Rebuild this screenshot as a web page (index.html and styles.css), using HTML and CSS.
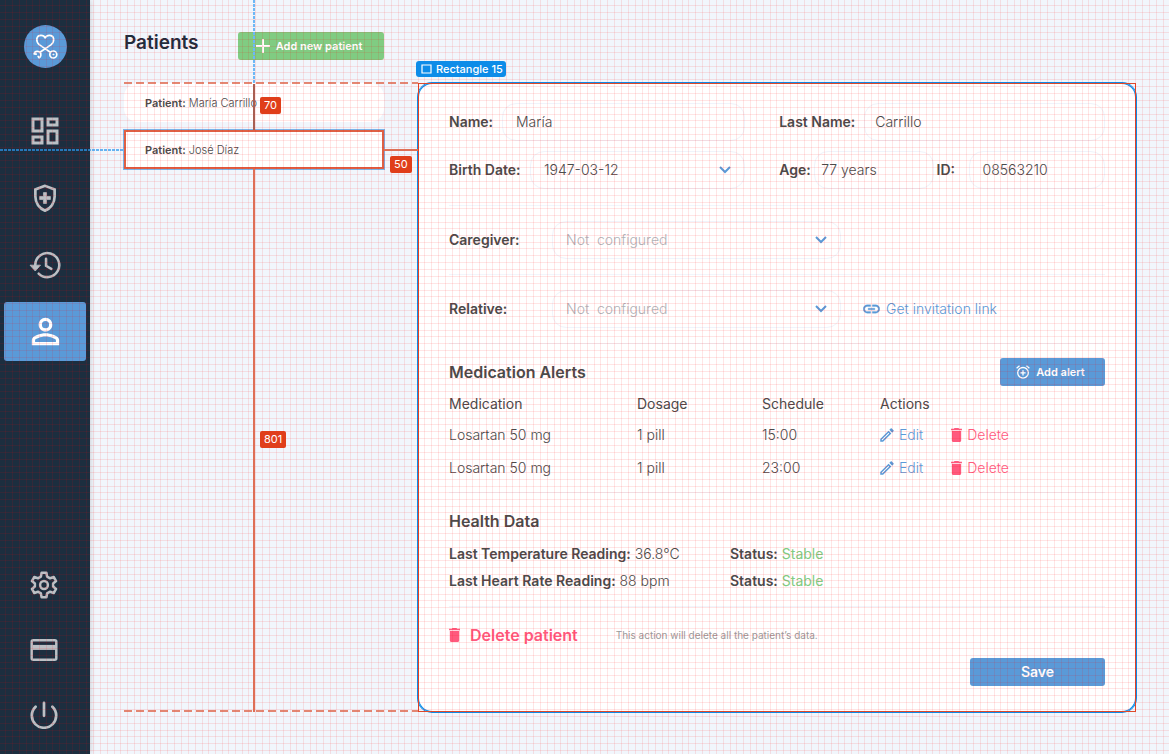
FILE: index.html
```html
<!DOCTYPE html>
<html lang="en">
<head>
<meta charset="utf-8">
<meta name="viewport" content="width=device-width, initial-scale=1">
<title>Patients</title>
<link rel="stylesheet" href="styles.css">
</head>
<body>
<svg class="symbols" aria-hidden="true">
  <symbol id="chevron" viewBox="0 0 12 8"><path d="M1 1l5 5 5-5" fill="none" stroke="currentColor" stroke-width="2"/></symbol>
  <symbol id="pencil" viewBox="0 0 24 24"><path fill="currentColor" d="M14.06 9.02l.92.92L5.92 19H5v-.92l9.06-9.06M17.66 3c-.25 0-.51.1-.7.29l-1.83 1.83 3.75 3.75 1.83-1.83c.39-.39.39-1.02 0-1.41l-2.34-2.34c-.2-.2-.45-.29-.71-.29zm-3.6 3.19L3 17.25V21h3.75L17.81 9.94l-3.75-3.75z"/></symbol>
  <symbol id="trash" viewBox="5 3 14 18"><path fill="currentColor" d="M6 19c0 1.100.9 2 2 2h8c1.100 0 2-.9 2-2V7H6v12zM19 4h-3.500l-1-1h-5l-1 1H5v2h14V4z"/></symbol>
</svg>
<div class="app">
  <nav class="sidebar" aria-label="Main">
    <div class="sidebar-group">
      <a class="logo" href="#" aria-label="Home">
        <svg width="43" height="43" viewBox="0 0 43 43" fill="none" stroke="#fff" stroke-width="1.700" stroke-linecap="round" stroke-linejoin="round">
          <path d="M26.300 27.300L21 23.600L15.200 19.600C11.500 16.300 12 10.400 17 10.300C19 10.300 20.600 11.400 21.200 12.800C21.800 11.400 23.400 10.300 25.400 10.300C30.300 10.400 31 16.300 27.200 19.600L16 27.300"/>
          <circle cx="29.300" cy="29.500" r="3.500"/><circle cx="29.300" cy="29.500" r=".6" fill="#fff" stroke-width=".6"/>
          <path d="M10.200 28.800c.4-1.700 2-2.700 3.600-2.400 1.900.3 3.300 1.900 3 3.900-.1 1-.8 1.900-1.700 2.500M10.200 28.800l2 .4M15.100 32.800l-.9-1.300"/>
        </svg>
      </a>
      <a class="nav-item" href="#" aria-label="Dashboard"><svg width="36" height="36" viewBox="0 0 24 24" fill="currentColor"><path d="M19 5v2h-4V5h4M9 5v6H5V5h4m10 8v6h-4v-6h4M9 17v2H5v-2h4M21 3h-8v6h8V3zM11 3H3v10h8V3zm10 8h-8v10h8V11zm-10 4H3v6h8v-6z"/></svg></a>
      <a class="nav-item" href="#" aria-label="Health"><svg width="34" height="34" viewBox="0 0 24 24"><path d="M12 3.400L5.200 6V11c0 4.500 2.800 8.500 6.800 9.900 4-1.400 6.800-5.400 6.800-9.900V6z" fill="none" stroke="currentColor" stroke-width="1.900"/><path d="M10.900 8.200h2.200v2.700h2.700v2.200h-2.700v2.700h-2.200v-2.700H8.200v-2.200h2.700z" fill="currentColor" stroke="currentColor" stroke-width=".5"/></svg></a>
      <a class="nav-item" href="#" aria-label="History"><svg width="36" height="36" viewBox="0 0 24 24"><path d="M5.500 12a8 8 0 1 1 2.300 5.700M12.700 7.800v4.700l3.500 2.100" fill="none" stroke="currentColor" stroke-width="1.700" stroke-linecap="round"/><path d="M2 12.100h7L5.500 16z" fill="currentColor" stroke="currentColor" stroke-width=".5" stroke-linejoin="round"/></svg></a>
      <a class="nav-item active" href="#" aria-label="Patients" aria-current="page"><svg width="41" height="41" viewBox="0 0 24 24" fill="currentColor"><path d="M12 5.900a2.100 2.100 0 1 1 0 4.200 2.100 2.100 0 0 1 0-4.200m0 9c2.970 0 6.100 1.460 6.100 2.100v1.100H5.900V17c0-.64 3.130-2.100 6.100-2.100M12 4C9.790 4 8 5.790 8 8s1.790 4 4 4 4-1.790 4-4-1.790-4-4-4zm0 9c-2.670 0-8 1.340-8 4v3h16v-3c0-2.660-5.330-4-8-4z"/></svg></a>
    </div>
    <div class="sidebar-group">
      <a class="nav-item" href="#" aria-label="Settings"><svg width="28" height="28" viewBox="0 0 28 28" fill="none" stroke="currentColor" stroke-width="2.500" stroke-linejoin="round"><path d="M11.600 1.800h4.800l.7 3.800 3 1.700 3.600-1.300 2.400 4.100-3 2.400v3l3 2.400-2.400 4.100-3.600-1.300-3 1.700-.7 3.800h-4.800l-.7-3.800-3-1.700-3.600 1.300-2.400-4.100 3-2.400v-3l-3-2.400L4.300 6l3.600 1.300 3-1.700z"/><circle cx="14" cy="14" r="3.900"/></svg></a>
      <a class="nav-item" href="#" aria-label="Billing"><svg width="28" height="24" viewBox="0 0 28 24" fill="none" stroke="currentColor" stroke-width="2.500"><rect x="1.700" y="2.200" width="24.600" height="19.600" rx="1.500"/><path d="M1.600 9.400h24.800" stroke-width="5"/></svg></a>
      <a class="nav-item" href="#" aria-label="Log out"><svg width="28" height="28" viewBox="0 0 28 28" fill="none" stroke="currentColor" stroke-width="2.700" stroke-linecap="round"><path d="M14 1.800v13M5.600 5.700a12.200 12.200 0 1 0 16.800 0"/></svg></a>
    </div>
  </nav>

  <main class="workspace">
    <section class="patients">
      <header class="patients-head">
        <h1>Patients</h1>
        <button class="btn btn-add" type="button"><svg width="14" height="14" viewBox="0 0 14 14"><path d="M7 0v14M0 7h14" stroke="#fff" stroke-width="2"/></svg>Add new patient</button>
      </header>
      <ul class="patient-list">
        <li class="patient"><span><b>Patient:</b> María Carrillo</span></li>
        <li class="patient selected"><span><b>Patient:</b> José Díaz</span></li>
      </ul>
      <div class="guide guide-v"></div>
      <div class="guide guide-h"></div>
      <div class="dash dash-top"></div>
      <div class="dash dash-bottom"></div>
      <div class="measure measure-top"></div>
      <div class="measure measure-bottom"></div>
      <div class="measure-side"></div>
      <span class="tag tag-top">70</span>
      <span class="tag tag-side">50</span>
      <span class="tag tag-bottom">801</span>
    </section>

    <form class="card">
      <div class="card-outline"></div>
      <span class="layer-name"><svg width="11" height="10" viewBox="0 0 11 10"><path d="M1 1h9v8H1z" fill="none" stroke="#fff" stroke-width="1.200"/></svg>Rectangle 15</span>

      <div class="pair">
        <div class="field"><label class="label-name" for="name">Name:</label><div class="box"><input id="name" type="text" value="María"></div></div>
        <div class="field"><label class="label-last" for="last">Last Name:</label><div class="box box-tight"><input id="last" type="text" value="Carrillo"></div></div>
      </div>
      <div class="pair pair-second">
        <div class="field"><label class="label-birth" for="birth">Birth Date:</label><div class="box"><select id="birth"><option>1947-03-12</option></select><svg class="chevron" width="12" height="8"><use href="#chevron"/></svg></div></div>
        <div class="trio">
          <div class="field field-age"><label class="label-age" for="age">Age:</label><div class="box box-age"><input id="age" type="text" value="77 years"></div></div>
          <div class="field field-id"><label class="label-id" for="pid">ID:</label><div class="box"><input id="pid" type="text" value="08563210"></div></div>
        </div>
      </div>
      <div class="contact">
        <label class="label-contact" for="caregiver">Caregiver:</label>
        <div class="box box-contact"><select id="caregiver"><option>Not&nbsp; configured</option></select><svg class="chevron" width="12" height="8"><use href="#chevron"/></svg></div>
      </div>
      <div class="contact">
        <label class="label-contact" for="relative">Relative:</label>
        <div class="box box-contact"><select id="relative"><option>Not&nbsp; configured</option></select><svg class="chevron" width="12" height="8"><use href="#chevron"/></svg></div>
        <a class="invite" href="#"><svg width="17" height="10" viewBox="2 6 20 12" fill="currentColor"><path d="M3.900 12c0-1.710 1.390-3.100 3.100-3.100h4V7H7c-2.760 0-5 2.240-5 5s2.240 5 5 5h4v-1.900H7c-1.710 0-3.100-1.390-3.100-3.100zM8 13h8v-2H8v2zm9-6h-4v1.900h4c1.710 0 3.100 1.390 3.100 3.100s-1.390 3.100-3.100 3.100h-4V17h4c2.760 0 5-2.240 5-5s-2.240-5-5-5z" stroke="currentColor" stroke-width=".4"/></svg>Get invitation link</a>
      </div>

      <section class="alerts">
        <header class="alerts-head">
          <h2>Medication Alerts</h2>
          <button class="btn btn-alert" type="button"><svg width="14" height="14" viewBox="0 0 14 14" fill="none" stroke="#fff" stroke-width="1.300"><circle cx="7" cy="7.800" r="5.300"/><path d="M7 5.200v5.200M4.400 7.800h5.200M.6 3.200L3.500.8M13.400 3.200L10.500.8"/></svg>Add alert</button>
        </header>
        <table>
          <thead><tr><th class="col-med">Medication</th><th class="col-dose">Dosage</th><th class="col-time">Schedule</th><th>Actions</th></tr></thead>
          <tbody>
            <tr><td>Losartan 50 mg</td><td>1 pill</td><td>15:00</td><td><div class="actions"><button class="link edit" type="button"><svg width="18" height="18"><use href="#pencil"/></svg>Edit</button><button class="link delete" type="button"><svg width="11" height="14"><use href="#trash"/></svg>Delete</button></div></td></tr>
            <tr><td>Losartan 50 mg</td><td>1 pill</td><td>23:00</td><td><div class="actions"><button class="link edit" type="button"><svg width="18" height="18"><use href="#pencil"/></svg>Edit</button><button class="link delete" type="button"><svg width="11" height="14"><use href="#trash"/></svg>Delete</button></div></td></tr>
          </tbody>
        </table>
      </section>

      <section class="health">
        <h2>Health Data</h2>
        <div class="reading"><span><b>Last Temperature Reading:</b> 36.8°C</span><span><b>Status:</b> <em>Stable</em></span></div>
        <div class="reading"><span><b>Last Heart Rate Reading:</b> 88 bpm</span><span><b>Status:</b> <em>Stable</em></span></div>
      </section>

      <div class="danger">
        <button class="link delete-patient" type="button"><svg width="11" height="14"><use href="#trash"/></svg>Delete patient</button>
        <small>This action will delete all the patient’s data.</small>
      </div>
      <div class="submit"><button class="btn btn-save" type="submit">Save</button></div>
    </form>
  </main>
</div>
<svg class="grid-overlay" aria-hidden="true">
  <defs><pattern id="grid" x="5" y="5" width="88" height="88" patternUnits="userSpaceOnUse">
    <path fill="#f00" fill-opacity=".1" d="M0 0h88v1H0zM0 7h88v1H0zM0 14h88v1H0zM0 21h88v1H0zM0 27h88v1H0zM0 34h88v1H0zM0 41h88v1H0zM0 47h88v1H0zM0 54h88v1H0zM0 61h88v1H0zM0 67h88v1H0zM0 74h88v1H0zM0 81h88v1H0z"/>
    <path fill="#f00" fill-opacity=".1" d="M0 0v88h1V0zM7 0v88h1V0zM14 0v88h1V0zM21 0v88h1V0zM27 0v88h1V0zM34 0v88h1V0zM41 0v88h1V0zM47 0v88h1V0zM54 0v88h1V0zM61 0v88h1V0zM67 0v88h1V0zM74 0v88h1V0zM81 0v88h1V0z"/>
  </pattern></defs>
  <rect width="100%" height="100%" fill="url(#grid)"/>
</svg>
</body>
</html>
```

FILE: styles.css
```css
* { box-sizing: border-box; }
body {
  margin: 0;
  position: relative;
  background: #f1f6fc;
  color: #4a4a4a;
  font: 350 14px/20px Inter, "Liberation Sans", sans-serif;
}
h1, h2, ul { margin: 0; padding: 0; }
b, label { font-weight: 600; }
button, input, select { font: inherit; color: inherit; border: 0; background: none; padding: 0; }
a { text-decoration: none; }
svg { flex: none; display: block; }
.symbols { display: none; }
.app { display: flex; min-height: 100vh; }

.sidebar {
  width: 90px;
  flex: none;
  padding: 25px 4px 11px;
  display: flex;
  flex-direction: column;
  justify-content: space-between;
  background: #1c2e3f;
  box-shadow: 0 0 6px rgba(0, 0, 0, .2);
}
.sidebar-group { display: flex; flex-direction: column; gap: 8px; }
.logo {
  width: 43px;
  height: 43px;
  margin: 0 auto 25px 20px;
  border-radius: 50%;
  background: #5a9ad8;
}
.nav-item {
  height: 59px;
  display: flex;
  align-items: center;
  justify-content: center;
  border-radius: 3px;
  color: #bcc0c5;
}
.sidebar-group:last-child .nav-item { height: 57px; padding-right: 2px; }
.nav-item.active { background: #5a9ad8; color: #fff; }

.workspace {
  flex: 1;
  min-width: 0;
  display: grid;
  grid-template-columns: 260px minmax(0, 1fr);
  column-gap: 34px;
  align-content: start;
  padding: 0 33px 41px 34px;
}
.patients { position: relative; padding-top: 32px; }
.patients-head { display: flex; justify-content: space-between; height: 28px; margin-bottom: 23px; }
h1 { font-size: 19px; line-height: 22px; font-weight: 600; color: #1f2d3d; }
.btn {
  display: flex;
  align-items: center;
  justify-content: center;
  gap: 6px;
  height: 28px;
  border-radius: 3px;
  background: #5a9ad8;
  color: #fff;
  font-size: 11px;
  font-weight: 600;
}
.btn-add { width: 146px; background: #80cc82; padding-right: 4px; }
.patient-list { list-style: none; display: flex; flex-direction: column; gap: 8px; }
.patient {
  height: 39px;
  display: flex;
  align-items: center;
  padding-left: 21px;
  border-radius: 14px;
  background: #fff;
  font-size: 11px;
}
.patient.selected { border: 2px solid #de6044; border-radius: 0; padding-left: 19px; box-shadow: 0 0 0 1px #78b4ea; }

.guide, .dash, .measure, .measure-side, .tag, .layer-name { position: absolute; z-index: 2; }
.guide-v { left: 129px; top: 0; width: 2px; height: 83px; background: repeating-linear-gradient(#6cb8f7 0 3px, transparent 3px 4px); }
.guide-h { left: -124px; top: 149px; width: 124px; height: 2px; background: repeating-linear-gradient(90deg, #2a97ee 0 3px, transparent 3px 4px); opacity: .7; }
.dash { left: 0; right: -34px; height: 2px; background: repeating-linear-gradient(90deg, #de6044 0 8px, transparent 8px 12px); opacity: .75; }
.dash-top { top: 82px; }
.dash-bottom { bottom: 0; }
.measure { left: 129px; border-left: 2px solid #de6f56; }
.measure-top { top: 84px; height: 46px; border-color: #a85f52; }
.measure-bottom { top: 169px; bottom: 0; }
.measure-side { left: 260px; top: 149px; width: 34px; border-top: 2px solid #de6f56; }
.tag {
  padding: 0 4px;
  border-radius: 2px;
  background: #e03e1a;
  color: #fff;
  font-size: 11px;
  font-weight: 400;
  line-height: 17px;
}
.tag-top { left: 136px; top: 97px; }
.tag-side { left: 266px; top: 156px; }
.tag-bottom { left: 136px; top: 431px; }

.card {
  position: relative;
  margin-top: 83px;
  padding: 20px 31px 26px;
  border-radius: 14px;
  background: #fff;
  box-shadow: 0 0 0 1px #0d8ce8, inset 0 0 0 1px #0d8ce8;
}
.card-outline { position: absolute; inset: 0; border: 1px solid #de4a2a; pointer-events: none; }
.layer-name {
  left: -2px;
  top: -22px;
  display: flex;
  align-items: center;
  gap: 4px;
  padding: 0 3px 0 5px;
  border-radius: 3px;
  background: #0d8ce8;
  color: #fff;
  font-size: 11px;
  line-height: 16px;
  font-weight: 500;
}
.pair { display: grid; grid-template-columns: minmax(0, 10fr) minmax(0, 11fr); column-gap: 34px; }
.pair-second { margin-top: 10px; padding-bottom: 16px; }
.trio { display: flex; gap: 3px; }
.field { display: flex; align-items: center; min-width: 0; }
.field-age { flex: 11; }
.field-id { flex: 12; }
.label-name { width: 53px; }
.label-last { width: 85px; }
.label-birth { width: 81px; }
.label-age { width: 35px; }
.label-id { width: 32px; }
.label-contact { width: 103px; }
.field label { flex: none; }
.box {
  flex: 1;
  min-width: 0;
  height: 38px;
  display: flex;
  align-items: center;
  padding: 0 13px;
  border: 1px solid #f0f4fb;
  border-radius: 14px;
}
.box-tight { padding: 0 10px; }
.box-age { padding: 0 6px; }
.box input, .box select { flex: 1; width: 100%; min-width: 0; appearance: none; outline: 0; }
.chevron { color: #5a9ad8; }
.contact { display: flex; align-items: center; height: 69px; border-top: 1px solid #f1f6fc; }
.box-contact { flex: 0 1 289px; color: #b0b3b7; }
.invite { display: flex; align-items: center; gap: 6px; margin-left: 22px; color: #5a9ad8; }

h2 { font-size: 16px; line-height: 22px; font-weight: 600; }
.alerts { border-top: 1px solid #f1f6fc; border-bottom: 1px solid #f1f6fc; padding: 14px 0 8px; }
.alerts-head { display: flex; align-items: center; justify-content: space-between; margin-bottom: 4px; }
.btn-alert { width: 105px; padding-right: 4px; }
table { width: 100%; border-collapse: collapse; table-layout: fixed; }
th, td { padding: 0; text-align: left; }
th { height: 28px; font-weight: 400; }
td { height: 33px; font-weight: 350; }
.col-med { width: 188px; }
.col-dose { width: 125px; }
.col-time { width: 118px; }
.actions { display: flex; gap: 28px; }
.link { display: flex; align-items: center; gap: 5px; }
.edit { color: #5a9ad8; margin-left: -2px; gap: 3px; }
.delete, .delete-patient { color: #ff5a7e; }

.health { padding: 17px 0 12px; border-bottom: 1px solid #f1f6fc; }
.health h2 { margin-bottom: 8px; }
.reading { display: grid; grid-template-columns: 281px 1fr; line-height: 27px; }
.reading em { font-style: normal; font-weight: 400; color: #80cc82; }
.danger { display: flex; align-items: center; gap: 38px; padding-top: 17px; }
.delete-patient { gap: 10px; font-size: 16px; line-height: 22px; font-weight: 600; }
small { font-size: 10px; font-weight: 400; color: #9a9a9a; }
.submit { display: flex; justify-content: flex-end; margin-top: 12px; }
.btn-save { width: 135px; font-size: 14px; }
.grid-overlay { position: absolute; inset: 0; width: 100%; height: 100%; z-index: 1; pointer-events: none; }
```
